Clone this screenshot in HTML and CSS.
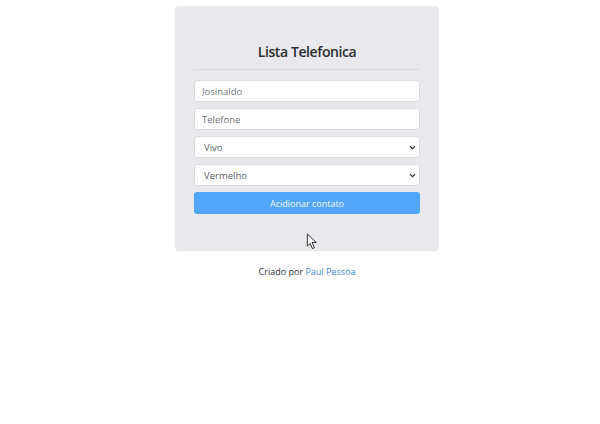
FILE: index.html
```html
<!DOCTYPE html>
<html lang="pt">
<head>
<meta charset="utf-8">
<title>Lista Telefonica</title>
<link rel="stylesheet" href="styles.css">
</head>
<body>
<main class="page">
  <section class="card">
    <h1 class="title">Lista Telefonica</h1>
    <hr class="rule">
    <form class="form">
      <input class="field" type="text" placeholder="Josinaldo">
      <input class="field" type="text" placeholder="Telefone">
      <div class="select">
        <span>Vivo</span>
        <svg class="chev" viewBox="0 0 8 6" width="7" height="5"><path d="M1 1.5 L4 4.5 L7 1.5" fill="none" stroke="#333" stroke-width="1.4"/></svg>
      </div>
      <div class="select">
        <span>Vermelho</span>
        <svg class="chev" viewBox="0 0 8 6" width="7" height="5"><path d="M1 1.5 L4 4.5 L7 1.5" fill="none" stroke="#333" stroke-width="1.4"/></svg>
      </div>
      <button class="btn" type="button">Acidionar contato</button>
    </form>
    <svg class="cursor" viewBox="0 0 12 18" width="12" height="17"><path d="M1 1 L1 14 L4 11 L6.5 16.5 L8.5 15.5 L6 10 L10.5 10 Z" fill="#fff" stroke="#222" stroke-width="1" stroke-linejoin="round"/></svg>
  </section>
  <p class="credit">Criado por <a class="link" href="#">Paul Pessoa</a></p>
</main>
</body>
</html>
```
FILE: styles.css
```css
html, body {
  margin: 0;
  padding: 0;
  background: #fff;
}
body {
  font-family: "Open Sans", "Noto Sans", sans-serif;
  color: #333;
}
.page {
  padding: 6px 0 0 14px;
  display: flex;
  flex-direction: column;
  align-items: center;
}
.card {
  position: relative;
  width: 264px;
  height: 245px;
  box-sizing: border-box;
  background: #e9e9ed;
  border-radius: 4px;
  padding: 36px 19px 0 19px;
}
.title {
  margin: 0;
  font-size: 14px;
  font-weight: 600;
  letter-spacing: -0.4px;
  text-align: center;
  color: #2c2f33;
  line-height: 20px;
}
.rule {
  margin: 7px 0 10px;
  border: 0;
  border-top: 1px solid #d9d9de;
}
.form {
  display: flex;
  flex-direction: column;
  gap: 6px;
}
.field, .select {
  box-sizing: border-box;
  height: 22px;
  width: 100%;
  background: #fff;
  border: 1px solid #dadadf;
  border-radius: 3px;
  padding: 0 7px;
  font-family: inherit;
  font-size: 9.5px;
  color: #555;
  outline: none;
}
.field::placeholder {
  color: #707479;
}
.select {
  display: flex;
  align-items: center;
  justify-content: space-between;
  color: #5a5f66;
  font-size: 9.5px;
  padding: 0 3px 0 9px;
}
.chev {
  display: block;
}
.btn {
  height: 22px;
  border: 0;
  border-radius: 3px;
  background: #52a6f8;
  color: #f2f8ff;
  font-family: inherit;
  font-size: 9px;
  padding: 0;
}
.cursor {
  position: absolute;
  left: 131px;
  top: 227px;
}
.credit {
  margin: 14px 0 0;
  font-size: 9px;
  color: #333;
}
.link {
  color: #3b8be0;
  text-decoration: none;
}
```
